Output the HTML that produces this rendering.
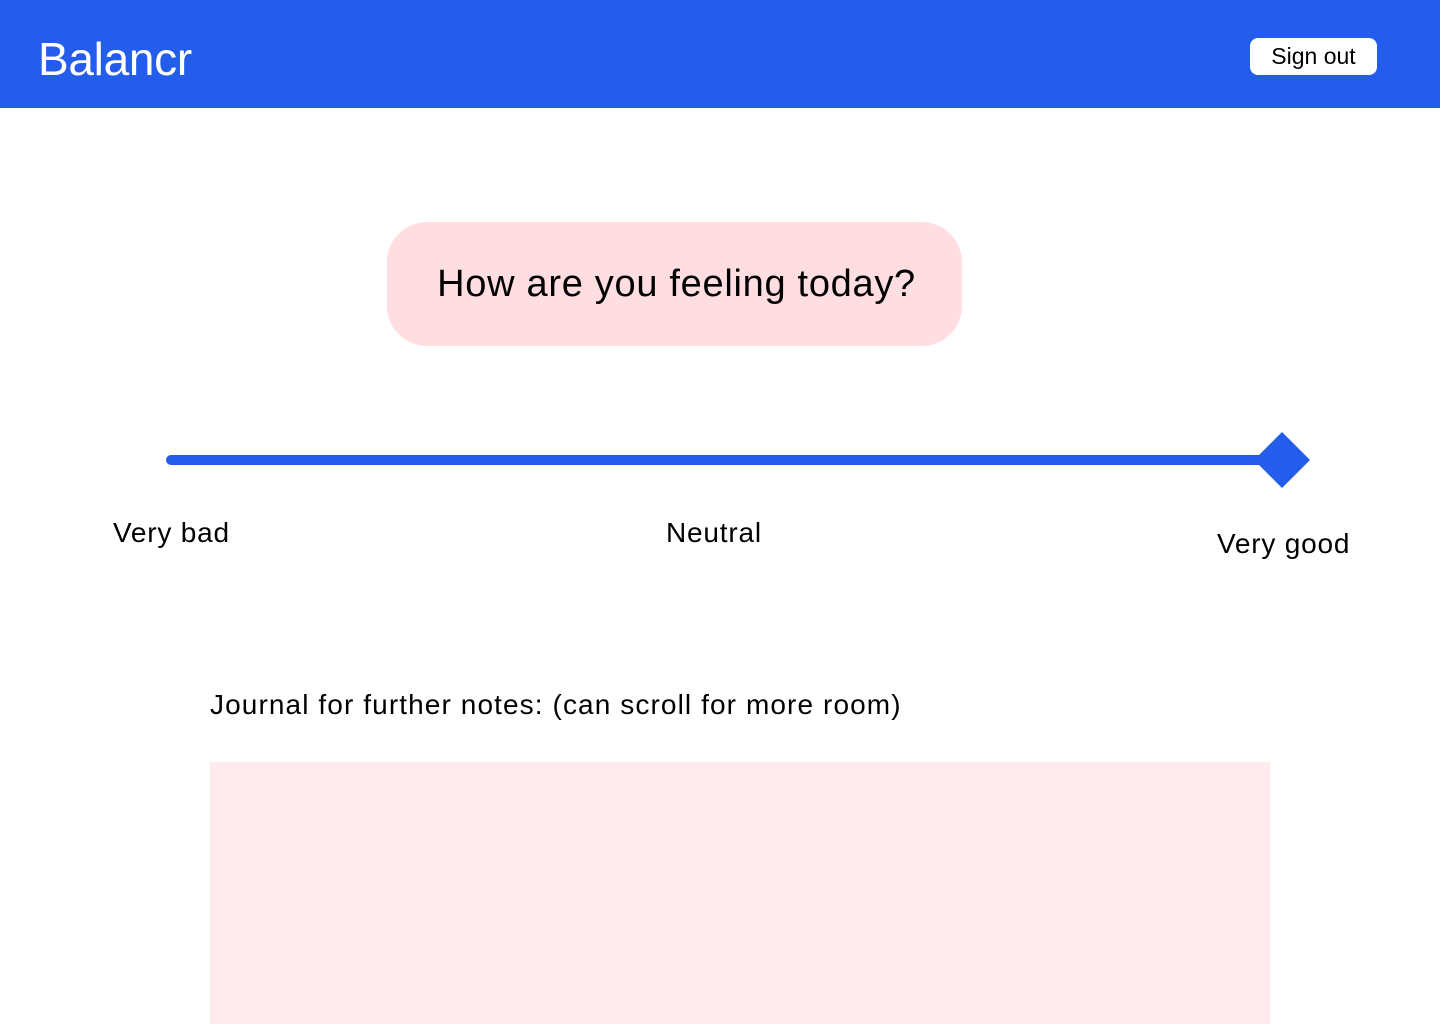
<!DOCTYPE html>
<html><head><style>
body{margin:0;width:1440px;height:1024px;background:#fff;font-family:"Liberation Sans",sans-serif;position:relative;overflow:hidden}
.hdr{position:absolute;left:0;top:0;width:1440px;height:108px;background:#245deb}
.logo{position:absolute;left:38px;top:32px;font-size:46px;color:#fff;line-height:54px;letter-spacing:-0.3px}
.btn{position:absolute;left:1250px;top:38px;width:127px;height:37px;background:#fff;border-radius:8px;font-size:23px;line-height:37px;text-align:center;color:#000}
.q{position:absolute;left:387px;top:222px;width:575px;height:124px;background:#ffdde1;border-radius:40px;font-size:38px;line-height:124px;text-align:center;color:#000;box-sizing:border-box;padding-left:4px;letter-spacing:0.7px}
.t{position:absolute;font-size:28px;color:#000;line-height:32px;letter-spacing:0.8px}
.j{position:absolute;left:210px;top:762px;width:1060px;height:262px;background:#ffebed}
</style></head><body>
<div class="hdr"><div class="logo">Balancr</div><div class="btn">Sign out</div></div>
<div class="q">How are you feeling today?</div>
<svg style="position:absolute;left:0;top:0" width="1440" height="600">
<line x1="171" y1="460" x2="1270" y2="460" stroke="#245deb" stroke-width="10" stroke-linecap="round"/>
<polygon points="1282,432 1310,460 1282,488 1254,460" fill="#245deb"/>
</svg>
<div class="t" style="left:113px;top:517px">Very bad</div>
<div class="t" style="left:666px;top:517px">Neutral</div>
<div class="t" style="left:1217px;top:528px">Very good</div>
<div class="t" style="left:210px;top:689px;letter-spacing:1.1px">Journal for further notes: (can scroll for more room)</div>
<div class="j"></div>
</body></html>
